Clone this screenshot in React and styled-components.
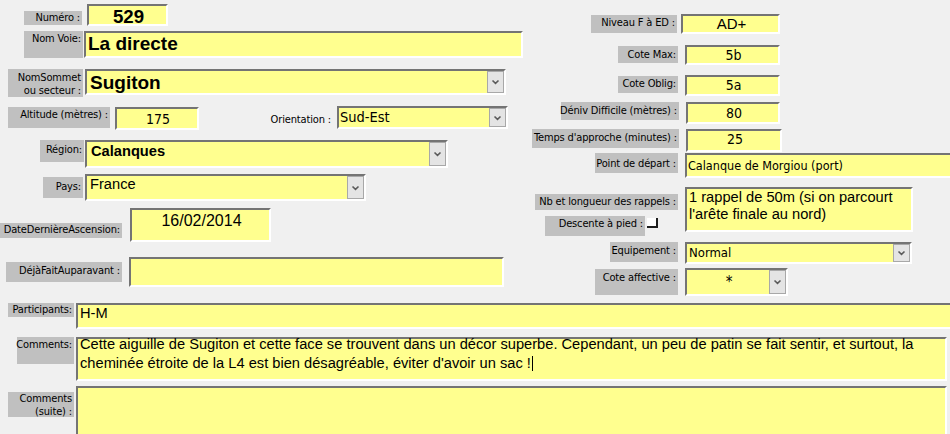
import React from 'react';
import styled, { createGlobalStyle } from 'styled-components';

const TAHOMA = `Tahoma, "DejaVu Sans Condensed", "Liberation Sans", sans-serif`;
const ARIAL = `Arial, "Liberation Sans", sans-serif`;

const Global = createGlobalStyle`
  html, body { margin: 0; padding: 0; background: #f0f0f0; }
  body { width: 950px; height: 434px; overflow: hidden; }
`;

const Form = styled.div`
  width: 950px;
  height: 434px;
  overflow: hidden;
  background: #f0f0f0;
  display: flex;
  flex-direction: column;
`;

const Top = styled.div`
  display: flex;
  height: 297px;
  flex-shrink: 0;
`;

const Column = styled.div`
  display: flex;
  flex-direction: column;
  width: ${p => p.$w}px;
  flex-shrink: 0;
`;

const Bottom = styled.div`
  display: flex;
  flex-direction: column;
`;

const Row = styled.div`
  display: flex;
  align-items: flex-start;
  height: ${p => p.$h}px;
  margin-top: ${p => p.$mt}px;
  flex-shrink: 0;
`;

const Label = styled.div`
  box-sizing: border-box;
  flex-shrink: 0;
  width: ${p => p.$w}px;
  height: ${p => p.$h}px;
  margin-top: ${p => p.$mt || 0}px;
  margin-left: ${p => p.$ml || 0}px;
  padding: ${p => p.$pt ?? 1}px 2px 0 0;
  background: ${p => (p.$plain ? 'transparent' : '#c0c0c0')};
  font-family: ${TAHOMA};
  font-size: 11px;
  letter-spacing: -0.15px;
  line-height: 13px;
  color: #000;
  text-align: right;
  white-space: pre;
  display: flex;
  flex-direction: column;
  align-items: flex-end;
`;

const Field = styled.div`
  box-sizing: border-box;
  flex-shrink: 0;
  display: flex;
  align-items: stretch;
  width: ${p => p.$w}px;
  height: ${p => p.$h}px;
  margin-top: ${p => p.$mt || 0}px;
  margin-left: ${p => p.$ml || 0}px;
  background: #ffff8f;
  border-top: 2px solid #747474;
  border-left: 2px solid #747474;
  border-right: 2px solid #ffffff;
  border-bottom: 2px solid #ffffff;
`;

const Value = styled.div`
  flex: 1;
  min-width: 0;
  align-self: flex-start;
  font-family: ${p => (p.$tahoma ? TAHOMA : ARIAL)};
  font-size: ${p => p.$size || 14}px;
  font-weight: ${p => (p.$bold ? 700 : 400)};
  line-height: ${p => p.$lh || 16}px;
  text-align: ${p => (p.$center ? 'center' : 'left')};
  padding-left: ${p => p.$pl ?? 2}px;
  margin-top: ${p => p.$dy || 0}px;
  color: #000;
  white-space: pre-wrap;
`;

const DropButton = styled.div`
  box-sizing: border-box;
  width: 17px;
  flex-shrink: 0;
  background: #e4e4e4;
  border: 1px solid #a8a8a8;
  display: flex;
  align-items: center;
  justify-content: center;
`;

const Caret = styled.span`
  display: inline-block;
  width: 1px;
  height: 15px;
  margin-left: 1px;
  background: #000;
  vertical-align: -3px;
`;

const LabelStack = styled.div`
  display: flex;
  flex-direction: column;
  align-items: flex-end;
  width: ${p => p.$w}px;
  flex-shrink: 0;
`;

const SubRow = styled.div`
  display: flex;
  align-items: flex-start;
  margin-top: ${p => p.$mt}px;
  margin-right: ${p => p.$mr}px;
`;

const Check = styled.div`
  box-sizing: border-box;
  width: 11px;
  height: 10px;
  margin-left: 2px;
  margin-top: ${p => p.$mt}px;
  background: #ffffff;
  border-right: 2px solid #1e1e1e;
  border-bottom: 2px solid #1e1e1e;
`;

const Chevron = () => (
  <svg width="9" height="6" viewBox="0 0 9 6">
    <polyline points="1.5,1.5 4.5,4.3 7.5,1.5" fill="none" stroke="#5a5a5a" strokeWidth="1.6" />
  </svg>
);

const Combo = ({ children, ...rest }) => (
  <Field {...rest}>
    {children}
    <DropButton>
      <Chevron />
    </DropButton>
  </Field>
);

const PT11 = 14.67;

export default function App() {
  return (
    <>
      <Global />
      <Form>
        <Top>
          <Column $w={530}>
            <Row $mt={4} $h={22}>
              <Label $ml={24} $w={58} $mt={7} $h={14} $pt={0}>Numéro :</Label>
              <Field $ml={5} $w={81} $h={22}>
                <Value $bold $size={18.67} $lh={16} $center $dy={3}>529</Value>
              </Field>
            </Row>
            <Row $mt={5} $h={27}>
              <Label $ml={24} $w={59} $h={27} $pt={1}>Nom Voie:</Label>
              <Field $ml={1} $w={439} $h={27}>
                <Value $bold $size={19} $lh={21} $dy={0}>La directe</Value>
              </Field>
            </Row>
            <Row $mt={11} $h={28}>
              <Label $ml={8} $w={75} $h={28} $pt={2}>
                <span>NomSommet</span>
                <span>ou secteur :</span>
              </Label>
              <Combo $ml={2} $w={421} $h={26}>
                <Value $bold $size={19} $lh={21} $pl={3} $dy={1}>Sugiton</Value>
              </Combo>
            </Row>
            <Row $mt={9} $h={24}>
              <Label $ml={8} $w={102} $mt={1} $h={21} $pt={1}>Altitude (mètres) :</Label>
              <Field $ml={5} $w={84} $mt={1} $h={23}>
                <Value $tahoma $size={14} $lh={16} $center $dy={2}>175</Value>
              </Field>
              <Label $plain $ml={64} $w={70} $mt={6} $h={16} $pt={1}>Orientation :</Label>
              <Combo $ml={4} $w={171} $h={23}>
                <Value $tahoma $size={14.5} $lh={17} $pl={1} $dy={1}>Sud-Est</Value>
              </Combo>
            </Row>
            <Row $mt={10} $h={28}>
              <Label $ml={40} $w={44} $h={22} $pt={3}>Région:</Label>
              <Combo $ml={1} $w={363} $h={28}>
                <Value $bold $size={PT11} $lh={17} $pl={4} $dy={1}>Calanques</Value>
              </Combo>
            </Row>
            <Row $mt={6} $h={27}>
              <Label $ml={43} $w={40} $mt={3} $h={21} $pt={3}>Pays:</Label>
              <Combo $ml={2} $w={281} $h={27}>
                <Value $size={PT11} $lh={16} $pl={3} $dy={0}>France</Value>
              </Combo>
            </Row>
            <Row $mt={7} $h={34}>
              <Label $ml={0} $w={122} $mt={15} $h={15} $pt={0}>DateDernièreAscension:</Label>
              <Field $ml={8} $w={141} $h={34}>
                <Value $size={16} $lh={18} $center $dy={2}>16/02/2014</Value>
              </Field>
            </Row>
            <Row $mt={15} $h={30}>
              <Label $ml={6} $w={116} $mt={5} $h={20} $pt={2}>DéjàFaitAuparavant :</Label>
              <Field $ml={7} $w={375} $h={30} />
            </Row>
          </Column>

          <Column $w={420}>
            <Row $mt={14} $h={20}>
              <Label $ml={61} $w={86} $mt={1} $h={18} $pt={1}>Niveau F à ED :</Label>
              <Field $ml={4} $w={99} $h={20}>
                <Value $size={15} $lh={16} $center $dy={0}>AD+</Value>
              </Field>
            </Row>
            <Row $mt={11} $h={20}>
              <Label $ml={88} $w={60} $mt={1} $h={17} $pt={2}>Cote Max:</Label>
              <Field $ml={7} $w={95} $h={20}>
                <Value $tahoma $size={14} $lh={16} $center $dy={0}>5b</Value>
              </Field>
            </Row>
            <Row $mt={10} $h={21}>
              <Label $ml={88} $w={60} $mt={1} $h={17} $pt={1}>Cote Oblig:</Label>
              <Field $ml={7} $w={95} $h={21}>
                <Value $tahoma $size={14} $lh={16} $center $dy={0}>5a</Value>
              </Field>
            </Row>
            <Row $mt={6} $h={22}>
              <Label $ml={31} $w={118} $h={18} $pt={2}>Déniv Difficile (mètres) :</Label>
              <Field $ml={7} $w={94} $h={22}>
                <Value $tahoma $size={14} $lh={16} $center $dy={1}>80</Value>
              </Field>
            </Row>
            <Row $mt={5} $h={23}>
              <Label $ml={2} $w={147} $h={19} $pt={2}>Temps d'approche (minutes) :</Label>
              <Field $ml={7} $w={96} $h={23}>
                <Value $tahoma $size={14} $lh={16} $center $dy={0}>25</Value>
              </Field>
            </Row>
            <Row $mt={1} $h={25}>
              <Label $ml={65} $w={83} $h={20} $pt={4}>Point de départ :</Label>
              <Field $ml={7} $w={270} $h={25}>
                <Value $tahoma $size={12.5} $lh={15} $pl={1} $dy={3}>Calanque de Morgiou (port)</Value>
              </Field>
            </Row>
            <Row $mt={9} $h={45}>
              <LabelStack $w={148}>
                <Label $w={143} $mt={7} $h={16} $pt={1}>Nb et longueur des rappels :</Label>
                <SubRow $mt={6} $mr={20}>
                  <Label $w={100} $h={20} $pt={1}>Descente à pied :</Label>
                  <Check $mt={2} />
                </SubRow>
              </LabelStack>
              <Field $ml={7} $w={228} $h={45}>
                <Value $size={PT11} $lh={17} $pl={2} $dy={0}>1 rappel de 50m (si on parcourt l'arête finale au nord)</Value>
              </Field>
            </Row>
            <Row $mt={10} $h={22}>
              <Label $ml={80} $w={68} $h={20} $pt={2}>Equipement :</Label>
              <Combo $ml={7} $w={227} $h={22}>
                <Value $tahoma $size={13} $lh={16} $pl={2} $dy={1}>Normal</Value>
              </Combo>
            </Row>
            <Row $mt={4} $h={28}>
              <Label $ml={65} $w={83} $mt={1} $h={26} $pt={2}>Cote affective :</Label>
              <Combo $ml={7} $w={103} $h={28}>
                <Value $tahoma $size={15} $lh={18} $center $dy={3}>*</Value>
              </Combo>
            </Row>
          </Column>
        </Top>

        <Bottom>
          <Row $mt={6} $h={26}>
            <Label $ml={8} $w={66} $h={14} $pt={0}>Participants:</Label>
            <Field $ml={2} $w={880} $h={26}>
              <Value $size={PT11} $lh={17} $pl={2} $dy={0}>H-M</Value>
            </Field>
          </Row>
          <Row $mt={8} $h={44}>
            <Label $ml={17} $w={57} $h={27} $pt={1}>Comments:</Label>
            <Field $ml={2} $w={871} $h={44}>
              <Value $size={PT11} $lh={19} $pl={2} $dy={-4}>
                Cette aiguille de Sugiton et cette face se trouvent dans un décor superbe. Cependant, un peu de patin se fait sentir, et surtout, la cheminée étroite de la L4 est bien désagréable, éviter d'avoir un sac !
                <Caret />
              </Value>
            </Field>
          </Row>
          <Row $mt={5} $h={50}>
            <Label $ml={8} $w={66} $mt={6} $h={25} $pt={0}>
              <span>Comments</span>
              <span>(suite) :</span>
            </Label>
            <Field $ml={2} $w={871} $h={50} />
          </Row>
        </Bottom>
      </Form>
    </>
  );
}
